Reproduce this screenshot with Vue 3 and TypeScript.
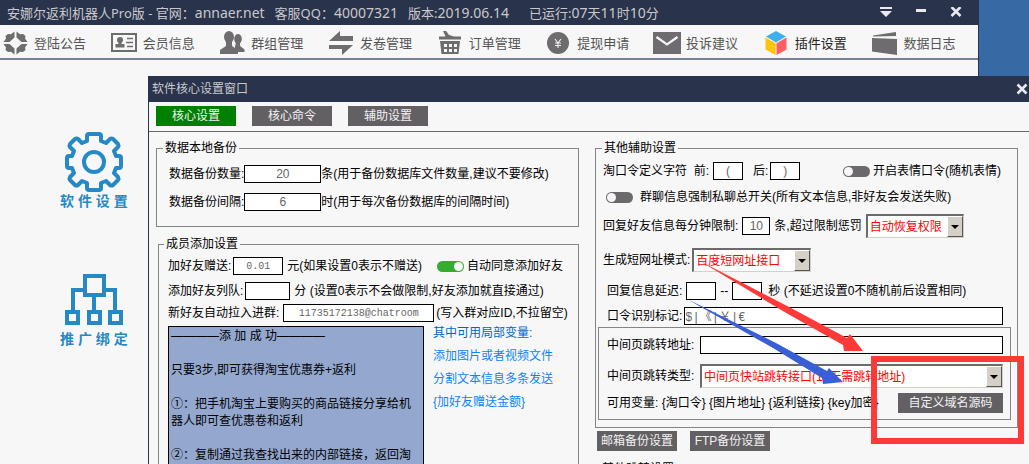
<script setup lang="ts">
import { ref } from 'vue'

interface NavItem {
  key: string
  label: string
  active?: boolean
}

const navItems: NavItem[] = [
  { key: 'notice', label: '登陆公告' },
  { key: 'member', label: '会员信息' },
  { key: 'group', label: '群组管理' },
  { key: 'coupon', label: '发卷管理' },
  { key: 'order', label: '订单管理' },
  { key: 'cash', label: '提现申请' },
  { key: 'mail', label: '投诉建议' },
  { key: 'plugin', label: '插件设置', active: true },
  { key: 'log', label: '数据日志' },
]

const tabs = ['核心设置', '核心命令', '辅助设置']
const activeTab = ref(0)

const backupCount = ref('20')
const backupHours = ref('6')
const gift = ref('0.01')
const queue = ref('')
const room = ref('11735172138@chatroom')
const autoAccept = ref(true)
const emojiToken = ref(false)
const forcePrivate = ref(false)
const before = ref('(')
const after = ref(')')
const perMinute = ref('10')
const delayFrom = ref('')
const delayTo = ref('')
const marks = ref('$|《|￥|€')
const jumpUrl = ref('')

const message = ref(
  [
    '————添 加 成 功————',
    '',
    '只要3步,即可获得淘宝优惠券+返利',
    '',
    '①：把手机淘宝上要购买的商品链接分享给机',
    '器人即可查优惠卷和返利',
    '',
    '②：复制通过我查找出来的内部链接，返回淘',
    '宝下单',
  ].join('\n'),
)
</script>

<template>
  <div class="desktop">
    <div class="main-window">
      <header class="titlebar">
        <h1 class="title">
          <span>安娜尔返利机器人Pro版 - 官网：<span class="latin">annaer.net</span></span>
          <span>客服QQ：<span class="latin">40007321</span></span>
          <span>版本:<span class="latin">2019.06.14</span></span>
          <span class="uptime">已运行:<span class="latin">07</span>天<span class="latin">11</span>时<span class="latin">10</span>分</span>
        </h1>
        <div class="controls">
          <button type="button" aria-label="菜单">
            <svg width="12" height="12" viewBox="0 0 12 12"><path d="M0 0h12v2H0zM0 4h12L6 10z" fill="#e9e9f0" /></svg>
          </button>
          <button type="button" aria-label="最小化">
            <svg width="12" height="12" viewBox="0 0 12 12"><path d="M1 2h10v3H1z" fill="#e9e9f0" /></svg>
          </button>
          <button type="button" aria-label="关闭">
            <svg width="12" height="12" viewBox="0 0 12 12"><path d="M1.500 0l9 9M10.500 0l-9 9" stroke="#e9e9f0" stroke-width="2.600" /></svg>
          </button>
        </div>
      </header>

      <nav class="toolbar">
        <button v-for="item in navItems" :key="item.key" type="button" class="nav-item" :class="{ active: item.active }">
          <svg class="nav-icon" width="30" height="24" viewBox="0 0 30 24" fill="#6e6c6e">
            <g v-if="item.key === 'notice'">
              <path d="M14.500 0.500v6L9.500 11H3.500L6 7.500 5.500 5 8 3l3 .3z" />
              <path d="M16.500 0.500v6l5 4.500h6L25 7.500l.5-2.500L23 3l-3 .3z" />
              <path d="M14.500 23.500v-6L9.500 13H3.500L6 16.500 5.500 19 8 21l3-.3z" />
              <path d="M16.500 23.500v-6l5-4.500h6L25 16.500l.5 2.500L23 21l-3-.3z" />
            </g>
            <g v-else-if="item.key === 'member'">
              <rect x="3" y="3" width="24" height="17" fill="none" stroke="#6e6c6e" stroke-width="2" />
              <circle cx="11" cy="9" r="3" />
              <path d="M9.500 10h3v3h3v3.500h-9V13h3z" />
              <path d="M18 7.500h6M17 11.500h7M18 15.500h6" stroke="#6e6c6e" stroke-width="1.600" />
            </g>
            <g v-else-if="item.key === 'group'">
              <ellipse cx="21" cy="8" rx="3.800" ry="5" />
              <path d="M19 11h4v4l4.500 3.500V21H17z" />
              <ellipse cx="12" cy="6" rx="5" ry="6" />
              <path d="M9 10h6v5l6 4v4H3v-4l6-4z" />
            </g>
            <g v-else-if="item.key === 'coupon'">
              <path d="M3 10L14 0v5h13v5zM27 14L16 24v-6H3v-4z" />
            </g>
            <g v-else-if="item.key === 'order'">
              <path d="M4 5.500h22v3H4zM8 0l3-.2 3 4.200 5 1.500-3 2-5-1z" />
              <path d="M5 10h20l-1.500 13h-17z" />
              <path d="M9 13h3v3H9zM14 13h3v3h-3zM19 13h3v3h-3zM9 18h3v3H9zM14 18h3v3h-3zM19 18h3v3h-3z" fill="#f7f7f7" />
            </g>
            <g v-else-if="item.key === 'cash'">
              <circle cx="15" cy="12" r="11" />
              <path d="M12 8l3 4 3-4M15 12v5M12 12h6M12 14.500h6" stroke="#f0f0f0" fill="none" stroke-width="1.100" />
            </g>
            <g v-else-if="item.key === 'mail'">
              <rect x="1" y="1" width="28" height="22" />
              <path d="M4.500 6L15 13.500 25.500 6" stroke="#f7f7f7" fill="none" stroke-width="2.200" />
            </g>
            <g v-else-if="item.key === 'plugin'">
              <path d="M15 0l10 5.500-10 6-10-6z" fill="#3db1ee" />
              <path d="M4.500 6.500l10 5.800V24l-10-5.500z" fill="#fdc309" />
              <path d="M25.500 6.500l-10 5.800V24l10-5.500z" fill="#fd5f63" />
            </g>
            <g v-else>
              <path d="M4 4.500L27 1v4L4 5.500zM3 7l25 1v16L3 20.500z" />
            </g>
          </svg>
          <span>{{ item.label }}</span>
        </button>
      </nav>

      <aside class="sidebar">
        <button type="button" class="side-item">
          <svg width="58" height="60" viewBox="0 0 58 60" fill="none" stroke="#2489c4" stroke-width="4" stroke-linejoin="round">
            <path d="M22 9V4q0-2 2-2h10q2 0 2 2v5l5 2 4-4q1.500-1 3 0l5 5q1 1.500 0 3l-4 4 2 5h3q2 0 2 2v8q0 2-2 2h-3l-2 5 4 4q1 1.500 0 3l-5 5q-1.500 1-3 0l-4-4-5 2v5q0 2-2 2H24q-2 0-2-2v-5l-5-2-4 4q-1.500 1-3 0l-5-5q-1-1.500 0-3l4-4-2-5H4q-2 0-2-2v-8q0-2 2-2h3l2-5-4-4q-1-1.500 0-3l5-5q1.500-1 3 0l4 4z" />
            <circle cx="29" cy="30" r="10" />
          </svg>
          <span>软 件 设 置</span>
        </button>
        <button type="button" class="side-item">
          <svg width="58" height="56" viewBox="0 0 58 56" fill="none" stroke="#2489c4" stroke-width="4">
            <path d="M20 2h19v19H20zM29 21v15M8 36V16h12M39 16h11v20" />
            <path d="M2 38h11v11H2zM24 38h11v11H24zM45 38h11v11H45z" />
          </svg>
          <span>推 广 绑 定</span>
        </button>
      </aside>
    </div>

    <section class="dialog" aria-labelledby="dialog-title">
      <header class="dialog-title">
        <h2 id="dialog-title">软件核心设置窗口</h2>
        <button type="button" aria-label="关闭窗口">
          <svg width="12" height="12" viewBox="0 0 12 12"><path d="M1.500 1.500l9 9M10.500 1.500l-9 9" stroke="#e9e9f0" stroke-width="2.600" /></svg>
        </button>
      </header>
      <div class="tabs">
        <button v-for="(tab, i) in tabs" :key="tab" type="button" class="btn tab" :class="{ selected: i === activeTab }" @click="activeTab = i">{{ tab }}</button>
      </div>

      <div class="body">
        <div class="column">
          <fieldset class="backup">
            <legend>数据本地备份</legend>
            <div class="row">
              <label for="count">数据备份数量:</label>
              <input id="count" v-model="backupCount" class="box w77" />
              <span>条(用于备份数据库文件数量,建议不要修改)</span>
            </div>
            <div class="row gap-l">
              <label for="hours">数据备份间隔:</label>
              <input id="hours" v-model="backupHours" class="box w77" />
              <span>时(用于每次备份数据库的间隔时间)</span>
            </div>
          </fieldset>

          <fieldset class="members">
            <legend>成员添加设置</legend>
            <div class="row">
              <label for="gift">加好友赠送:</label>
              <input id="gift" v-model="gift" class="box mono w50 ml2" />
              <span class="ml4">元(如果设置0表示不赠送)</span>
              <label class="switch-label push-right"><input v-model="autoAccept" type="checkbox" class="switch" /><span>自动同意添加好友</span></label>
            </div>
            <div class="row gap-m">
              <label for="queue">添加好友列队:</label>
              <input id="queue" v-model="queue" class="box w45 ml2" />
              <span class="ml4">分 (设置0表示不会做限制,好友添加就直接通过)</span>
            </div>
            <div class="row gap-s">
              <label for="room">新好友自动拉入进群:</label>
              <input id="room" v-model="room" class="box mono room ml4" />
              <span class="ml2">(写入群对应ID,不拉留空)</span>
            </div>
            <div class="reply gap-s">
              <textarea v-model="message" rows="10" aria-label="添加成功消息"></textarea>
              <div class="links">
                <a href="#vars" class="lead">其中可用局部变量:</a>
                <a href="#media">添加图片或者视频文件</a>
                <a href="#split">分割文本信息多条发送</a>
                <a href="#amount">{加好友赠送金额}</a>
              </div>
            </div>
          </fieldset>
        </div>

        <div class="column">
          <fieldset class="others">
            <legend>其他辅助设置</legend>
            <div class="row">
              <label for="before">淘口令定义字符&nbsp; 前:</label>
              <input id="before" v-model="before" class="box w30 ml4" />
              <label for="after" class="ml10">后:</label>
              <input id="after" v-model="after" class="box w30 ml2" />
              <label class="switch-label push-right emoji"><input v-model="emojiToken" type="checkbox" class="switch" /><span>开启表情口令(随机表情)</span></label>
            </div>
            <div class="row gap-m private">
              <label class="switch-label"><input v-model="forcePrivate" type="checkbox" class="switch" /><span class="ml4">群聊信息强制私聊总开关(所有文本信息,非好友会发送失败)</span></label>
            </div>
            <div class="row tall gap-m">
              <label for="minute">回复好友信息每分钟限制:</label>
              <input id="minute" v-model="perMinute" class="box w28 ml4" />
              <label for="punish" class="ml4">条,超过限制惩罚</label>
              <span class="combo w98 ml4"><select id="punish"><option>自动恢复权限</option></select><i></i></span>
            </div>
            <div class="row tall gap-l">
              <label for="short">生成短网址模式:</label>
              <span class="combo w119 ml2"><select id="short"><option>百度短网址接口</option></select><i></i></span>
            </div>
            <div class="row gap-l indent">
              <label for="from">回复信息延迟:</label>
              <input id="from" v-model="delayFrom" class="box w30 ml4" />
              <label for="to" class="ml4">--</label>
              <input id="to" v-model="delayTo" class="box w30 ml4" />
              <span class="ml6">秒 (不延迟设置0不随机前后设置相同)</span>
            </div>
            <div class="row gap-m indent marks">
              <label for="marks">口令识别标记:</label>
              <input id="marks" v-model="marks" class="box grow left ml2" />
            </div>
            <div class="jump">
              <div class="row">
                <label for="url" class="w93">中间页跳转地址:</label>
                <input id="url" v-model="jumpUrl" class="box grow" />
              </div>
              <div class="row tall gap-l">
                <label for="type" class="w93">中间页跳转类型:</label>
                <span class="combo grow"><select id="type"><option>中间页快站跳转接口(1, 无需跳转地址)</option></select><i></i></span>
              </div>
              <div class="row vars">
                <span>可用变量: {淘口令} {图片地址} {返利链接} {key加密}</span>
                <button type="button" class="btn source">自定义域名源码</button>
              </div>
            </div>
          </fieldset>
          <div class="actions">
            <button type="button" class="btn">邮箱备份设置</button>
            <button type="button" class="btn">FTP备份设置</button>
          </div>
          <fieldset class="next">
            <legend>其他跳转设置</legend>
          </fieldset>
        </div>
      </div>
    </section>

    <svg class="annotations" width="340" height="200" viewBox="690 250 340 200" aria-hidden="true">
      <path d="M698 260L791 308 847 338 850 334 863 351 844 351 843 345 788 314z" fill="#fd3a38" />
      <path d="M685 298L776 343 827 371 829 368 843 382 823 384 822 378 773 348z" fill="#3a5ed4" />
      <rect x="874" y="359" width="147" height="82" fill="none" stroke="#fd3a38" stroke-width="6" />
    </svg>
  </div>
</template>

<style>
body {
  margin: 0;
}
</style>

<style scoped>
.desktop {
  position: relative;
  min-height: 100vh;
  overflow: hidden;
  background: #3769a4;
  color: #000;
  font: 12px/14px "Liberation Sans", "Noto Sans CJK SC", sans-serif;
  white-space: nowrap;
}
button,
input,
select,
textarea {
  font: inherit;
  color: inherit;
  margin: 0;
  padding: 0;
  border: 0;
  border-radius: 0;
  box-sizing: border-box;
}
button {
  background: none;
}
svg {
  display: block;
}
.main-window {
  box-sizing: border-box;
  width: calc(100% - 50px);
  min-height: 100vh;
  border-right: 1px solid #29334b;
  background: #f7f7f7;
}
.titlebar {
  display: flex;
  justify-content: space-between;
  align-items: center;
  height: 25px;
  padding: 0 16px 0 7px;
  background: #29334b;
  color: #c9c9cc;
}
.title {
  display: flex;
  gap: 10px;
  margin: 0;
  font: 13px/20px "Noto Sans", "Noto Sans CJK SC", sans-serif;
}
.latin {
  font-size: 14px;
}
.uptime {
  margin-left: 10px;
}
.controls {
  display: flex;
  gap: 23px;
}
.toolbar {
  display: flex;
  height: 33px;
  border-bottom: 2px solid #75809a;
}
.nav-item {
  display: flex;
  align-items: center;
  gap: 4px;
  width: 109px;
  padding-bottom: 1px;
  padding-top: 4px;
  color: #555;
  font: 13px/20px "Noto Sans CJK SC", sans-serif;
}
.nav-item.active {
  color: #222;
}
.sidebar {
  display: flex;
  flex-direction: column;
  align-items: flex-start;
  gap: 64px;
  padding: 72px 0 0 60px;
}
.side-item {
  display: flex;
  flex-direction: column;
  align-items: center;
  color: #2489c4;
  font: bold 14px/18px "Liberation Sans", "Noto Sans CJK SC", sans-serif;
}
.dialog {
  position: absolute;
  top: 76px;
  right: 0;
  bottom: 0;
  left: 148px;
  overflow: hidden;
  border-left: 1px solid #29334b;
  background: #f7f7f7;
}
.dialog-title {
  display: flex;
  justify-content: space-between;
  align-items: center;
  height: 26px;
  padding: 0 1px 0 3px;
  background: #29334b;
  color: #c9c9cc;
}
.dialog-title h2 {
  margin: 0;
  font: inherit;
}
.tabs {
  display: flex;
  gap: 16px;
  padding: 4px 7px 5px;
  border-bottom: 1px solid #666;
}
.btn {
  min-width: 80px;
  height: 20px;
  background: #636063;
  color: #f2f2f2;
}
.tab.selected {
  background: #008000;
}
.body {
  display: grid;
  grid-template-columns: 1fr 1fr;
  gap: 16px;
  padding: 9px 11px 0 7px;
}
.column {
  min-width: 0;
}
fieldset {
  min-width: 0;
  margin: 0;
  border: 1px solid #858585;
}
legend {
  margin-left: -6px;
  padding: 0 2px;
}
.backup {
  padding: 10px 12px 15px;
}
.members {
  margin: 10px 0 0 2px;
  padding: 6px 9px 10px;
}
.members legend {
  margin-left: -4px;
}
.others {
  padding: 7px 6px 7px 7px;
}
.others legend {
  margin-left: -1px;
}
.row {
  display: flex;
  align-items: center;
  height: 18px;
}
.tall {
  height: 24px;
}
.gap-s {
  margin-top: 4px;
}
.gap-m {
  margin-top: 7px;
}
.gap-l {
  margin-top: 10px;
}
.indent {
  padding-left: 4px;
}
.marks {
  padding-right: 8px;
}
.private {
  height: 20px;
  padding-left: 3px;
}
.ml2 {
  margin-left: 2px;
}
.ml4 {
  margin-left: 4px;
}
.ml6 {
  margin-left: 6px;
}
.ml10 {
  margin-left: 10px;
}
.push-right {
  margin-left: auto;
}
.emoji {
  padding-right: 10px;
}
.members .push-right {
  padding-right: 6px;
}
.box {
  flex: none;
  height: 18px;
  border: 1px solid #000;
  background: #fff;
  color: #666;
  text-align: center;
}
.box.mono {
  font-family: "Liberation Mono", monospace;
  font-size: 10px;
}
.box.left {
  text-align: left;
  font-family: "Liberation Mono", "Noto Sans CJK SC", monospace;
}
.box.grow,
.combo.grow {
  flex: 1;
  min-width: 0;
}
.w28 {
  width: 28px;
}
.w30 {
  width: 30px;
}
.w45 {
  width: 45px;
}
.w50 {
  width: 50px;
}
.w77 {
  width: 77px;
}
.w93 {
  width: 93px;
}
.w98 {
  width: 98px;
}
.w119 {
  width: 119px;
}
.room {
  width: 151px;
}
.switch-label {
  display: flex;
  align-items: center;
  gap: 3px;
}
.switch {
  appearance: none;
  display: flex;
  width: 27px;
  height: 11px;
  padding: 1px;
  border-radius: 6px;
  background: #6b696b;
}
.switch::before {
  content: "";
  width: 9px;
  height: 9px;
  border-radius: 50%;
  background: #f7f7f7;
}
.switch:checked {
  justify-content: flex-end;
  background: #32ad30;
}
.combo {
  display: grid;
  box-sizing: border-box;
  height: 24px;
  border: 1px solid #d4d0c8;
  border-top: 2px solid #6b6b6b;
  border-left: 2px solid #6b6b6b;
  background: #fff;
}
.combo select {
  grid-area: 1 / 1;
  appearance: none;
  width: 100%;
  padding: 0 18px 0 2px;
  background: transparent;
  color: #f00;
}
.combo i {
  grid-area: 1 / 1;
  justify-self: end;
  display: flex;
  align-items: center;
  justify-content: center;
  box-sizing: border-box;
  width: 16px;
  border: 1px solid #fff;
  border-right-color: #555;
  border-bottom-color: #555;
  background: #d4d0c8;
  pointer-events: none;
}
.combo i::before {
  content: "";
  border: 4px solid transparent;
  border-top-color: #000;
  border-bottom: 0;
}
.reply {
  display: flex;
  gap: 9px;
}
.reply textarea {
  flex: none;
  width: 256px;
  padding: 1px 2px;
  overflow: hidden;
  resize: none;
  border: 1px solid #000;
  background: #94a8cf;
  line-height: 17px;
}
.links {
  display: flex;
  flex-direction: column;
  gap: 9px;
}
.links a {
  color: #0a84ff;
  text-decoration: none;
}
.links .lead {
  color: #0066cc;
}
.jump {
  margin: 2px 0 0 -5px;
  padding: 8px 7px 6px 8px;
  border: 1px solid #858585;
}
.vars {
  justify-content: space-between;
  height: 20px;
  margin-top: 5px;
}
.source {
  width: 105px;
}
.actions {
  display: flex;
  gap: 13px;
  padding: 3px 2px 11px;
}
.next {
  padding: 10px;
}
.annotations {
  position: absolute;
  top: 250px;
  left: 690px;
  pointer-events: none;
}
</style>
